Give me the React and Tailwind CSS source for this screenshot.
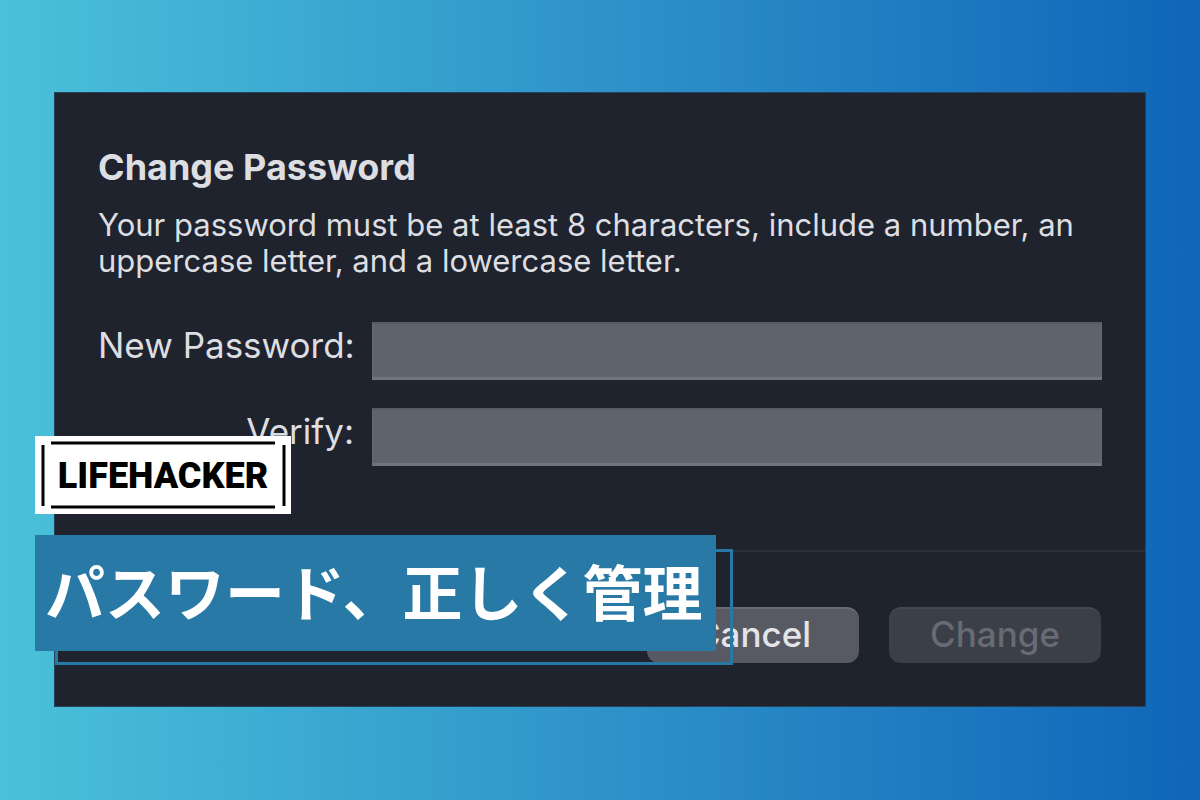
function Field({ id, label }) {
  return (
    <div className="flex items-start">
      <label htmlFor={id} className="w-64 shrink-0 pt-[3px] text-right text-[35px] leading-10 whitespace-nowrap">
        {label}
      </label>
      <input
        id={id}
        type="password"
        className="ml-[18px] h-[58px] min-w-0 flex-1 border-x border-t-2 border-b-3 border-x-[#666971] border-t-[#585b63] border-b-[#72757d] bg-[#5f636b] px-3 outline-none"
      />
    </div>
  );
}

function Logo() {
  return (
    <svg viewBox="0 0 256 78" className="block w-64" role="img" aria-label="LIFEHACKER">
      <rect width="256" height="78" fill="#fff" />
      <path d="M16 7H240M16 71H240M8 9V70M249 9V70" stroke="#000" strokeWidth="3" />
      <text x="128" y="52" textAnchor="middle" fontSize="36" fontWeight="900" fontFamily="Roboto, sans-serif">
        LIFEHACKER
      </text>
    </svg>
  );
}

export default function App() {
  return (
    <main className="relative min-h-screen bg-linear-to-r from-[#4ac1da] via-[#2f93c9] to-[#1065b8] px-[54px] py-[92px] font-['Inter','Noto_Sans_CJK_JP',sans-serif]">
      <form className="border border-[#25425a] bg-[#1f232d] text-[#dddee2]">
        <div className="px-[43px] pt-[54px]">
          <h1 className="text-4xl leading-10 font-bold">Change Password</h1>
          <p className="mt-5 text-[31px] leading-9">
            Your password must be at least 8 characters, include a number, an uppercase letter, and a lowercase letter.
          </p>
          <div className="mt-[43px] space-y-7">
            <Field id="new" label="New Password:" />
            <Field id="verify" label="Verify:" />
          </div>
        </div>
        <div className="mt-[84px] flex justify-end gap-[30px] border-t-2 border-[#2d303a] px-[44px] pt-[55px] pb-[43px] text-[35px] leading-10 font-medium">
          <button type="button" className="h-14 w-[212px] rounded-xl border-t-2 border-[#686b73] bg-[#575a63] pb-1 text-[#e4e4e8]">
            Cancel
          </button>
          <button type="button" disabled className="h-14 w-[212px] rounded-xl border-t-2 border-[#43474f] bg-[#3a3f48] pb-1 text-[#686b74]">
            Change
          </button>
        </div>
      </form>
      <div className="absolute top-[436px] left-[35px]">
        <Logo />
        <div className="relative mt-[21px]">
          <div className="absolute top-3.5 left-5 h-[116px] w-[678px] border-[3px] border-[#2879a5]" />
          <h2 className="relative h-[116px] w-[681px] bg-[#2879a5] pl-2.5 font-['Noto_Sans_CJK_JP',sans-serif] text-[60px] leading-[110px] font-bold whitespace-nowrap text-white">
            パスワード、正しく管理
          </h2>
        </div>
      </div>
    </main>
  );
}
